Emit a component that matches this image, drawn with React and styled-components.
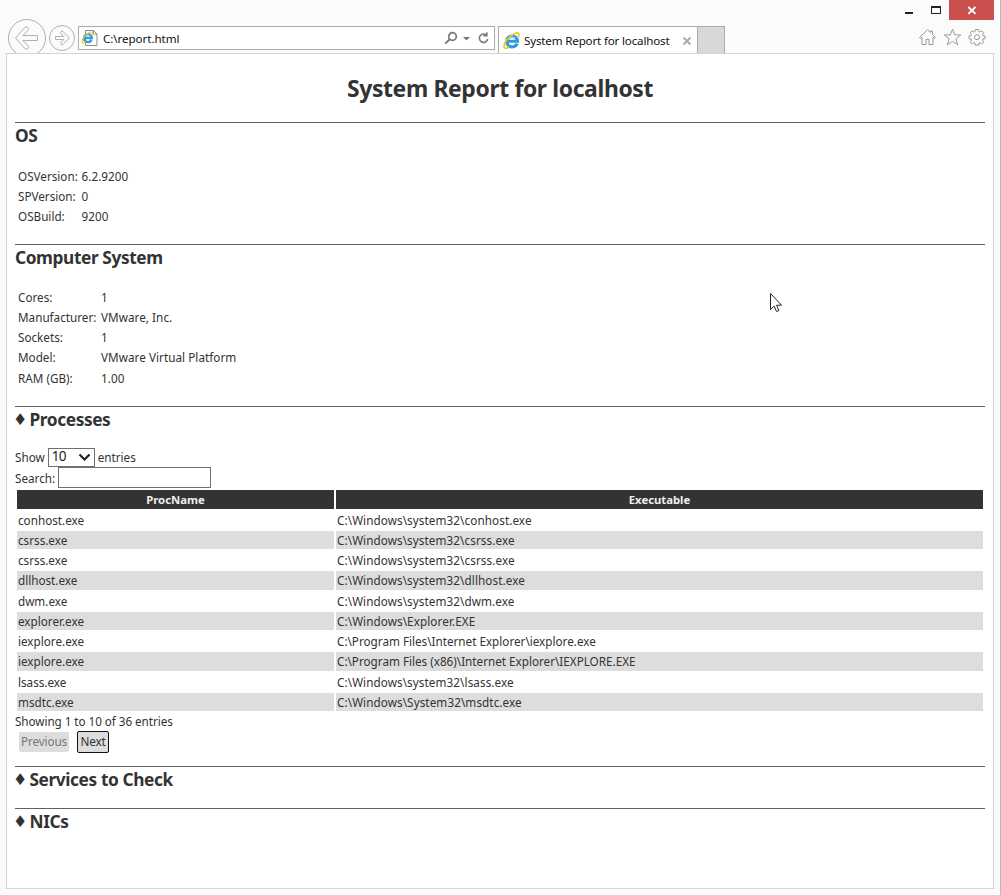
import React from 'react';
import styled, { createGlobalStyle } from 'styled-components';

const GlobalStyle = createGlobalStyle`
  *, *::before, *::after { box-sizing: border-box; }
  body { margin: 0; background: #fbfbfb; }
`;

const Window = styled.div`
  position: relative;
  display: flex;
  flex-direction: column;
  width: 1001px;
  height: 895px;
  overflow: hidden;
  background: #fbfbfb;
  border-right: 1px solid #b9b9b9;
  color: #333;
  font-family: 'Noto Sans', 'Open Sans', sans-serif;
  font-size: 11.7px;
`;

const TitleBar = styled.div`
  display: flex;
  justify-content: flex-end;
  height: 20px;
  padding-right: 6px;
`;

const WindowButton = styled.button`
  display: flex;
  width: ${(p) => p.$width}px;
  height: 20px;
  padding: 0;
  border: 0;
  background: ${(p) => (p.$close ? '#c9504d' : 'transparent')};
`;

const NavBar = styled.div`
  display: flex;
  align-items: flex-start;
  height: 33px;
  padding-left: 7px;
`;

const BackButton = styled.svg`
  flex: none;
  width: 40px;
  height: 40px;
  margin-top: -2px;
`;

const ForwardButton = styled.svg`
  flex: none;
  width: 28px;
  height: 28px;
  margin: 4px 2px 0 1px;
`;

const AddressBar = styled.div`
  display: flex;
  align-items: center;
  width: 417px;
  height: 24px;
  margin-top: 6px;
  padding: 0 4px 0 2px;
  border: 1px solid #ababab;
  background: #fff;
`;

const Address = styled.span`
  flex: 1;
  margin-left: 5px;
  padding-top: 1px;
  color: #111;
  font-size: 11.6px;
  line-height: 20px;
  letter-spacing: -0.06px;
`;

const Tab = styled.div`
  display: flex;
  align-items: center;
  width: 200px;
  height: 27px;
  margin: 6px 0 0 3px;
  padding: 1px 5px 0 4px;
  border: 1px solid #ababab;
  border-bottom: 0;
  background: #fff;
`;

const TabTitle = styled.span`
  flex: 1;
  margin-left: 4px;
  color: #111;
  font-size: 11.6px;
  letter-spacing: -0.17px;
  white-space: nowrap;
`;

const NewTab = styled.div`
  width: 27px;
  height: 27px;
  margin-top: 6px;
  border: 1px solid #ababab;
  border-width: 1px 1px 0 0;
  background: #d8d8d8;
`;

const Tools = styled.div`
  display: flex;
  gap: 7px;
  margin: 8px 14px 0 auto;
`;

const Page = styled.main`
  position: relative;
  width: 988px;
  height: 836px;
  margin-left: 6px;
  padding: 0 8px;
  border: 1px solid #d4d4d4;
  background: #fff;
`;

const Title = styled.h1`
  height: 68px;
  margin: 0;
  font-size: 22.9px;
  font-weight: 700;
  line-height: 70px;
  letter-spacing: -0.37px;
  text-align: center;
`;

const Section = styled.section`
  height: ${(p) => p.$height}px;
  border-top: 1px solid #606060;
`;

const Heading = styled.h2`
  display: flex;
  align-items: center;
  height: 26px;
  margin: 0;
  font-size: 17.3px;
  font-weight: 700;
  line-height: 26px;
  letter-spacing: -0.4px;
`;

const Bullet = styled.span`
  width: 14.500px;
  font-family: 'DejaVu Sans', sans-serif;
  font-size: 16px;
  font-weight: 400;
  letter-spacing: 0;
  text-indent: -2px;
`;

const InfoGrid = styled.dl`
  display: grid;
  grid-template-columns: ${(p) => p.$labelWidth}px 1fr;
  grid-auto-rows: 20.25px;
  margin: ${(p) => p.$top}px 0 0 3px;
  line-height: 20.25px;
`;

const Label = styled.dt`
  white-space: nowrap;
`;

const Value = styled.dd`
  margin: 0;
  letter-spacing: 0.05px;
`;

const Controls = styled.div`
  display: flex;
  flex-direction: column;
  margin-top: 14px;
`;

const ControlRow = styled.label`
  display: flex;
  align-items: center;
  gap: 3px;
  height: ${(p) => p.$height}px;
`;

const Select = styled.span`
  display: flex;
  align-items: center;
  justify-content: space-between;
  width: 47px;
  height: 19px;
  padding: 0 3px;
  border: 1px solid #707070;
  background: #fff;
  color: #222;
  font-size: 13.6px;
  line-height: 15px;
  letter-spacing: -0.6px;
`;

const SelectValue = styled.span`
  padding-bottom: 3px;
`;

const SearchInput = styled.input`
  width: 153px;
  height: 21px;
  padding: 0 3px;
  border: 1px solid #707070;
  background: #fff;
`;

const Table = styled.div`
  display: grid;
  gap: 2px;
  margin: 2.4px 2px 0;
`;

const Row = styled.div`
  display: grid;
  grid-template-columns: 317px 647px;
  gap: 2px;
  height: 18.24px;
  line-height: 18.8px;
`;

const HeaderCell = styled.div`
  height: 18.24px;
  background: #333;
  color: #eee;
  font-size: 11.3px;
  font-weight: 700;
  line-height: 20px;
  text-align: center;
`;

const Cell = styled.div`
  height: 18.24px;
  padding-left: 1px;
  background: ${(p) => (p.$shaded ? '#ddd' : '#fff')};
  white-space: nowrap;
  letter-spacing: ${(p) => p.$spacing || 0}px;
`;

const Summary = styled.div`
  height: 20px;
  line-height: 20px;
  letter-spacing: -0.05px;
`;

const Pager = styled.div`
  display: flex;
  align-items: center;
  gap: 8px;
  height: 22px;
  padding-left: 4px;
`;

const PageButton = styled.button`
  width: ${(p) => (p.disabled ? 50 : 32)}px;
  height: ${(p) => (p.disabled ? 20 : 22)}px;
  padding: 0 0 1px;
  border: ${(p) => (p.disabled ? '0' : '1px solid #111')};
  border-radius: 2px;
  background: #ddd;
  color: ${(p) => (p.disabled ? '#777' : '#333')};
  font: inherit;
  line-height: 18px;
  letter-spacing: -0.1px;
`;

const Cursor = styled.svg`
  position: absolute;
  left: 770px;
  top: 293px;
`;

const osInfo = [
  ['OSVersion:', '6.2.9200'],
  ['SPVersion:', '0'],
  ['OSBuild:', '9200'],
];

const computerInfo = [
  ['Cores:', '1'],
  ['Manufacturer:', 'VMware, Inc.'],
  ['Sockets:', '1'],
  ['Model:', 'VMware Virtual Platform'],
  ['RAM (GB):', '1.00'],
];

const processes = [
  ['conhost.exe', 'C:\\Windows\\system32\\conhost.exe'],
  ['csrss.exe', 'C:\\Windows\\system32\\csrss.exe'],
  ['csrss.exe', 'C:\\Windows\\system32\\csrss.exe'],
  ['dllhost.exe', 'C:\\Windows\\system32\\dllhost.exe'],
  ['dwm.exe', 'C:\\Windows\\system32\\dwm.exe'],
  ['explorer.exe', 'C:\\Windows\\Explorer.EXE'],
  ['iexplore.exe', 'C:\\Program Files\\Internet Explorer\\iexplore.exe'],
  ['iexplore.exe', 'C:\\Program Files (x86)\\Internet Explorer\\IEXPLORE.EXE'],
  ['lsass.exe', 'C:\\Windows\\system32\\lsass.exe'],
  ['msdtc.exe', 'C:\\Windows\\System32\\msdtc.exe'],
];

function IELogo() {
  return (
    <g fill="none">
      <path d="M13.3 10.900A5.100 5.100 0 1 1 13.700 8.700H5" stroke="#2f9ae0" strokeWidth="3" />
      <path d="M4.200 6.900A5 5 0 0 1 12 6" stroke="#8fd2f7" strokeWidth="0.900" />
      <path
        d="M14.500 4.800C15.600 2.600 15.200.900 13.300.900 10.400.900 5.600 4.300 2.800 8.500.900 11.500.400 14.600 1.900 15.200c1 .4 2.500-.2 3.800-1.200"
        stroke="#f5c518"
        strokeWidth="1.600"
      />
    </g>
  );
}

function PageIcon() {
  return (
    <svg width="17" height="17" viewBox="0 0 17 17">
      <path d="M4.500.5h8l3.500 3.500v11.500H4.500z" fill="#fff" stroke="#8d8d8d" />
      <path d="M12.500.5v3.500h3.500" fill="none" stroke="#8d8d8d" />
      <g transform="translate(0.300 1.300) scale(0.770)">
        <IELogo />
      </g>
    </svg>
  );
}

function InfoList({ items, labelWidth, top }) {
  return (
    <InfoGrid $labelWidth={labelWidth} $top={top}>
      {items.map(([label, value]) => (
        <React.Fragment key={label}>
          <Label>{label}</Label>
          <Value>{value}</Value>
        </React.Fragment>
      ))}
    </InfoGrid>
  );
}

export default function App() {
  return (
    <>
      <GlobalStyle />
      <Window>
        <TitleBar>
          <WindowButton $width={27} aria-label="Minimize">
            <svg width="27" height="20"><path d="M10 12h8v2h-8z" fill="#222" /></svg>
          </WindowButton>
          <WindowButton $width={27} aria-label="Maximize">
            <svg width="27" height="20">
              <path d="M9 6h10v8H9zM10 8v5h8V8z" fill="#222" fillRule="evenodd" />
            </svg>
          </WindowButton>
          <WindowButton $width={45} $close aria-label="Close">
            <svg width="45" height="20">
              <path d="m19.300 7 7.200 6.800M26.500 7l-7.200 6.800" stroke="#fff" strokeWidth="1.800" />
            </svg>
          </WindowButton>
        </TitleBar>

        <NavBar>
          <BackButton viewBox="0 0 40 40">
            <circle cx="20" cy="20" r="18.500" fill="none" stroke="#b0b0b0" />
            <path
              d="M30.500 17.500H15.800l5.200-5c2-1.900-1-5-3.200-3L8.500 20l9.300 10.500c2.200 2 5.200-1.100 3.200-3l-5.200-5h14.700z"
              fill="none" stroke="#b0b0b0" strokeLinejoin="round"
            />
          </BackButton>
          <ForwardButton viewBox="0 0 28 28">
            <circle cx="14" cy="14" r="12.500" fill="none" stroke="#b0b0b0" />
            <path
              d="M7.500 12.500h8.300L13 9.600c-1.200-1.300.6-3.200 2-2L21.500 14 15 20.400c-1.400 1.200-3.200-.7-2-2l2.800-2.900H7.500z"
              fill="none" stroke="#b0b0b0" strokeLinejoin="round"
            />
          </ForwardButton>
          <AddressBar>
            <PageIcon />
            <Address>C:\report.html</Address>
            <svg width="46" height="16" viewBox="0 0 46 16" fill="none" stroke="#777">
              <circle cx="8.500" cy="6.500" r="3.800" strokeWidth="1.700" />
              <path d="m5.700 9.300-4.500 4.300" strokeWidth="1.900" />
              <path d="M19 7h7l-3.500 3.500z" fill="#777" stroke="none" />
              <path d="M43 5.700A4.200 4.200 0 1 0 43.700 9" strokeWidth="1.600" />
              <path d="M39.400 5.800h3.400V2.200" strokeWidth="1.500" />
            </svg>
          </AddressBar>
          <Tab>
            <svg width="17" height="17" viewBox="0 0 16 16"><IELogo /></svg>
            <TabTitle>System Report for localhost</TabTitle>
            <svg width="10" height="10" viewBox="0 0 10 10">
              <path d="m1.500 1.500 7 7m0-7-7 7" stroke="#aaa" strokeWidth="1.900" />
            </svg>
          </Tab>
          <NewTab />
          <Tools>
            <svg width="18" height="18" viewBox="0 0 18 18" fill="none" stroke="#999" strokeLinejoin="round">
              <path d="M1.500 9.500 9.500 1.700l3 2.800V3h2v3.500l3 3-1 1-1.500-1.400v7.400h-4v-5h-3v5h-4V9.100L2.500 10.500z" />
            </svg>
            <svg width="18" height="18" viewBox="0 0 18 18" fill="none" stroke="#999" strokeLinejoin="round">
              <path d="m9.500 1.200 2.100 5.600 6.200.2-4.900 3.800 1.800 6-5.200-3.400-5.200 3.400 1.800-6L1.200 7l6.200-.2z" />
            </svg>
            <svg width="18" height="18" viewBox="0 0 18 18" fill="none" stroke="#999" strokeLinejoin="round">
              <path d="M7.400 1.500h3.200l.3 2.100 1.100.5 1.700-1.300 2 2-1.300 1.700.5 1.100 2.100.3v2.800l-2.100.4-.5 1.200 1.300 1.700-2 2-1.700-1.300-1.100.5-.3 2H7.400l-.4-2-1.100-.5L4.200 16l-2-2 1.300-1.700-.5-1.200-2-.4V7.900l2-.3.5-1.100-1.300-1.700 2-2 1.700 1.300L7 3.600z" />
              <circle cx="9" cy="9.200" r="2.500" />
            </svg>
          </Tools>
        </NavBar>

        <Page>
          <Title>System Report for localhost</Title>

          <Section $height={122}>
            <Heading>OS</Heading>
            <InfoList items={osInfo} labelWidth={63.5} top={16.5} />
          </Section>

          <Section $height={162}>
            <Heading>Computer System</Heading>
            <InfoList items={computerInfo} labelWidth={83} top={15.5} />
          </Section>

          <Section $height={360}>
            <Heading><Bullet>♦</Bullet>Processes</Heading>
            <Controls>
              <ControlRow $height={20}>
                <span>Show</span>
                <Select>
                  <SelectValue>10</SelectValue>
                  <svg width="13" height="9" viewBox="0 0 13 9">
                    <path d="m1.500 1.500 5 5 5-5" fill="none" stroke="#222" strokeWidth="2.200" />
                  </svg>
                </Select>
                <span>entries</span>
              </ControlRow>
              <ControlRow $height={21}>
                <span>Search:</span>
                <SearchInput aria-label="Search" />
              </ControlRow>
            </Controls>
            <Table>
              <Row>
                <HeaderCell>ProcName</HeaderCell>
                <HeaderCell>Executable</HeaderCell>
              </Row>
              {processes.map(([name, path], i) => (
                <Row key={i}>
                  <Cell $shaded={i % 2 === 1}>{name}</Cell>
                  <Cell $shaded={i % 2 === 1} $spacing={path.includes('Program') ? 0 : 0.09}>{path}</Cell>
                </Row>
              ))}
            </Table>
            <Summary>Showing 1 to 10 of 36 entries</Summary>
            <Pager>
              <PageButton disabled>Previous</PageButton>
              <PageButton>Next</PageButton>
            </Pager>
          </Section>

          <Section $height={42}>
            <Heading><Bullet>♦</Bullet>Services to Check</Heading>
          </Section>

          <Section $height={42}>
            <Heading><Bullet>♦</Bullet>NICs</Heading>
          </Section>
        </Page>

        <Cursor width="12" height="20" viewBox="0 0 12 20">
          <path d="M.5.500v16l3.600-3.400 2.400 5.400 2.400-1-2.300-5.300h4.900z" fill="#fff" stroke="#223" />
        </Cursor>
      </Window>
    </>
  );
}
